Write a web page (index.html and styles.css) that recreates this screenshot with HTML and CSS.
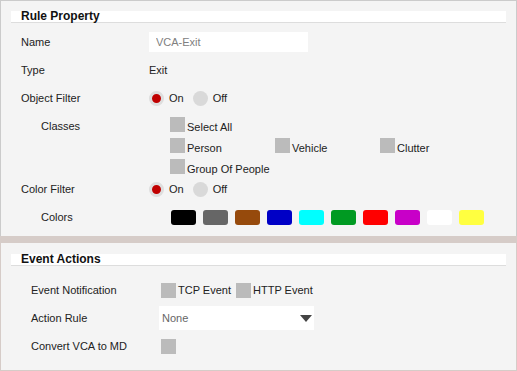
FILE: index.html
```html
<!DOCTYPE html>
<html lang="en">
<head>
    <meta charset="UTF-8">
    <meta name="viewport" content="width=device-width, initial-scale=1.0">
    <title>VCA Rule</title>
    <link rel="stylesheet" href="styles.css">
</head>
<body>
    <div class="panel panel-rule">
        <div class="section-title">Rule Property</div>
        <div class="rows">
            <div class="row">
                <div class="label">Name</div>
                <div class="value"><input class="text-input" type="text" value="VCA-Exit"></div>
            </div>
            <div class="row">
                <div class="label">Type</div>
                <div class="value">Exit</div>
            </div>
            <div class="row">
                <div class="label">Object Filter</div>
                <div class="value radio-group">
                    <span class="radio on"></span><span class="radio-text">On</span>
                    <span class="radio off"></span><span class="radio-text">Off</span>
                </div>
            </div>
            <div class="row row-tall">
                <div class="label sub">Classes</div>
                <div class="value">
                    <div class="class-grid">
                        <label class="check-item wide"><span class="check"></span>Select All</label>
                        <label class="check-item"><span class="check"></span>Person</label>
                        <label class="check-item"><span class="check"></span>Vehicle</label>
                        <label class="check-item"><span class="check"></span>Clutter</label>
                        <label class="check-item wide"><span class="check"></span>Group Of People</label>
                    </div>
                </div>
            </div>
            <div class="row">
                <div class="label">Color Filter</div>
                <div class="value radio-group">
                    <span class="radio on"></span><span class="radio-text">On</span>
                    <span class="radio off"></span><span class="radio-text">Off</span>
                </div>
            </div>
            <div class="row">
                <div class="label sub">Colors</div>
                <div class="value swatches">
                    <span class="swatch" style="background:#000000"></span>
                    <span class="swatch" style="background:#666666"></span>
                    <span class="swatch" style="background:#964a0c"></span>
                    <span class="swatch" style="background:#0000c6"></span>
                    <span class="swatch" style="background:#00ffff"></span>
                    <span class="swatch" style="background:#009a22"></span>
                    <span class="swatch" style="background:#ff0000"></span>
                    <span class="swatch" style="background:#c800c8"></span>
                    <span class="swatch" style="background:#ffffff"></span>
                    <span class="swatch" style="background:#ffff40"></span>
                </div>
            </div>
        </div>
    </div>

    <div class="separator"></div>

    <div class="panel panel-event">
        <div class="section-title">Event Actions</div>
        <div class="rows">
            <div class="row">
                <div class="label">Event Notification</div>
                <div class="value checks">
                    <label class="inline-check"><span class="check"></span>TCP Event</label>
                    <label class="inline-check"><span class="check"></span>HTTP Event</label>
                </div>
            </div>
            <div class="row">
                <div class="label">Action Rule</div>
                <div class="value">
                    <div class="select">
                        <span>None</span>
                        <svg width="12" height="7" viewBox="0 0 12 7"><polygon points="0,0 12,0 6,7" fill="#444"/></svg>
                    </div>
                </div>
            </div>
            <div class="row">
                <div class="label">Convert VCA to MD</div>
                <div class="value checks">
                    <span class="check"></span>
                </div>
            </div>
        </div>
    </div>
</body>
</html>
```

FILE: styles.css
```css
* {
    margin: 0;
    padding: 0;
    box-sizing: border-box;
    font-family: 'Liberation Sans', Arial, sans-serif;
}

body {
    width: 517px;
    background: #f4f4f4;
    color: #222;
    font-size: 11px;
}

.panel {
    background: #f4f4f4;
    padding: 10px 10px 0 10px;
}

.panel-rule {
    border: 1px solid #cbcbcb;
    border-bottom: none;
    padding-bottom: 5px;
}

.panel-event {
    border: 1px solid #d6ccc8;
    border-top: none;
    padding-top: 11px;
    padding-bottom: 10px;
}

.section-title {
    height: 12px;
    line-height: 11px;
    background: #fff;
    border-bottom: 1px solid #ddd;
    padding-left: 10px;
    font-size: 12px;
    font-weight: bold;
    color: #111;
}

.separator {
    height: 7px;
    background: #d6ccc8;
}

.rows {
    padding-left: 10px;
}

.panel-rule .rows {
    margin-top: 5px;
}

.panel-event .rows {
    margin-top: 10px;
    padding-left: 20px;
}

.row {
    display: flex;
    align-items: center;
    height: 28px;
}

.label {
    width: 128px;
    flex-shrink: 0;
}

.label.sub {
    padding-left: 20px;
}

.value {
    display: flex;
    align-items: center;
}

.text-input {
    width: 159px;
    height: 20px;
    border: none;
    background: #fff;
    padding: 0 7px;
    font-size: 11px;
    color: #808080;
    outline: none;
}

.radio {
    width: 15px;
    height: 15px;
    border-radius: 50%;
}

.radio.on {
    background: #c00000;
    border: 3px solid #dedede;
}

.radio.off {
    background: #d9d9d9;
    margin-left: 9px;
}

.radio-text {
    margin-left: 5px;
}

.row-tall {
    height: 63px;
    align-items: flex-start;
}

.row-tall .label {
    line-height: 28px;
}

.class-grid {
    display: grid;
    grid-template-columns: 105px 105px 105px;
    row-gap: 6px;
    margin-left: 21px;
    padding-top: 5px;
}

.check-item {
    display: flex;
    align-items: flex-end;
    height: 15px;
    line-height: 9px;
    white-space: nowrap;
}

.check-item.wide {
    grid-column: 1 / 4;
}

.check {
    display: inline-block;
    width: 15px;
    height: 15px;
    background: #bbb;
    margin-right: 2px;
    flex-shrink: 0;
}

.swatches {
    gap: 7px;
    margin-left: 22px;
}

.swatch {
    width: 25px;
    height: 15px;
    border-radius: 3px;
}

.checks {
    margin-left: 2px;
}

.inline-check {
    display: flex;
    align-items: center;
    margin-right: 5px;
}

.select {
    width: 155px;
    height: 24px;
    background: #fff;
    display: flex;
    align-items: center;
    justify-content: space-between;
    padding: 0 2px 0 3px;
    color: #666;
}
```
